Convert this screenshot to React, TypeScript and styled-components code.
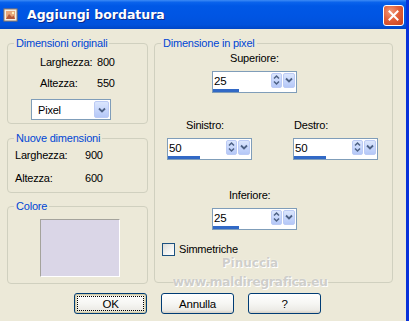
import styled, { createGlobalStyle } from "styled-components";

const GlobalStyle = createGlobalStyle`
  html, body {
    margin: 0;
    padding: 0;
    background: #ece9d8;
  }
  * {
    box-sizing: border-box;
  }
`;

const Window = styled.div`
  position: relative;
  width: 409px;
  height: 321px;
  display: flex;
  flex-direction: column;
  background: #ece9d8;
  border-right: 3px solid #0831d9;
  font-family: "Liberation Sans", Arial, sans-serif;
  font-size: 11px;
  letter-spacing: -0.2px;
  color: #000;
  overflow: hidden;
`;

const TitleBar = styled.div`
  height: 29px;
  flex: none;
  display: flex;
  align-items: center;
  padding: 0 2px 0 3px;
  letter-spacing: normal;
  background: linear-gradient(
    to bottom,
    #3d8bf5 0%,
    #0a63ec 8%,
    #0058e6 20%,
    #0055e3 55%,
    #0052dc 85%,
    #0046c6 100%
  );
`;

const TitleIcon = styled.svg`
  width: 16px;
  height: 16px;
  flex: none;
`;

const TitleText = styled.div`
  margin-left: 8px;
  flex: 1;
  color: #fff;
  font-family: "DejaVu Sans", "Liberation Sans", sans-serif;
  font-weight: bold;
  font-size: 12.5px;
  text-shadow: 1px 1px 0 #0b2a8c;
`;

const CloseButton = styled.div`
  width: 21px;
  height: 21px;
  margin-top: 1px;
  border: 1px solid #fff;
  border-radius: 3px;
  display: flex;
  align-items: center;
  justify-content: center;
  background: radial-gradient(
    circle at 35% 30%,
    #f29a7a 0%,
    #e2603a 45%,
    #c8401c 100%
  );
`;

const Body = styled.div`
  flex: 1;
  display: flex;
  flex-direction: column;
  padding: 8px 0 0 7px;
`;

const Columns = styled.div`
  display: grid;
  grid-template-columns: 141px 239px;
  column-gap: 6px;
  align-items: start;
`;

const LeftColumn = styled.div`
  display: flex;
  flex-direction: column;
`;

const Group = styled.fieldset<{ $h: number; $mt?: number }>`
  margin: ${(p) => p.$mt ?? 0}px 0 0 0;
  padding: 0;
  height: ${(p) => p.$h}px;
  min-width: 0;
  border: 1px solid #d0d0bf;
  border-radius: 4px;
`;

const Legend = styled.legend`
  margin-left: 6px;
  padding: 0 2px;
  line-height: 13px;
  color: #0046d5;
`;

const GroupContent = styled.div<{ $pt: number; $pl: number }>`
  display: flex;
  flex-direction: column;
  align-items: flex-start;
  padding: ${(p) => p.$pt}px 0 0 ${(p) => p.$pl}px;
`;

const InfoRow = styled.div<{ $mt: number; $labelW: number }>`
  display: grid;
  grid-template-columns: ${(p) => p.$labelW}px auto;
  line-height: 13px;
  margin-top: ${(p) => p.$mt}px;
`;

const Select = styled.div`
  margin-top: 9px;
  margin-left: -9px;
  width: 80px;
  height: 21px;
  border: 1px solid #7f9db9;
  background: #fff;
  display: flex;
  align-items: center;
  padding: 1px;
`;

const SelectText = styled.div`
  flex: 1;
  padding-left: 5px;
`;

const ArrowButton = styled.div<{ $w: number; $h: number }>`
  width: ${(p) => p.$w}px;
  height: ${(p) => p.$h}px;
  flex: none;
  display: flex;
  align-items: center;
  justify-content: center;
  border: 1px solid #bccbf5;
  border-radius: 2px;
  background: linear-gradient(to bottom, #dbe6fd 0%, #c4d4fb 60%, #b5c8f7 100%);
`;

const Swatch = styled.div`
  margin-top: 6px;
  width: 80px;
  height: 58px;
  background: #dad6e7;
  border: 1px solid;
  border-color: #a4a39c #fff #fff #a4a39c;
`;

const PixelContent = styled.div`
  display: flex;
  flex-direction: column;
  align-items: flex-start;
  padding-top: 2px;
`;

const Field = styled.div<{ $indent: number }>`
  display: flex;
  flex-direction: column;
  margin-left: ${(p) => p.$indent}px;
`;

const FieldLabel = styled.div<{ $pl: number }>`
  padding-left: ${(p) => p.$pl}px;
  line-height: 13px;
  height: 13px;
  margin-bottom: 6px;
`;

const FieldRow = styled.div<{ $mt: number }>`
  display: flex;
  gap: 41px;
  margin-top: ${(p) => p.$mt}px;
`;

const Spin = styled.div`
  width: 85px;
  height: 22px;
  border: 1px solid #7f9db9;
  background: #fff;
  display: flex;
  flex-direction: column;
`;

const SpinTop = styled.div`
  height: 16px;
  display: flex;
  align-items: center;
  padding-right: 1px;
  gap: 1px;
`;

const SpinValue = styled.div`
  flex: 1;
  padding-left: 1px;
  padding-top: 1px;
  font-size: 11.5px;
`;

const SpinBar = styled.div`
  margin-top: 1px;
  height: 3px;
  background: #3169c6;
`;

const CheckRow = styled.div`
  margin: 13px 0 0 7px;
  display: flex;
  align-items: center;
  gap: 4px;
  line-height: 13px;
`;

const CheckBox = styled.div`
  width: 13px;
  height: 13px;
  border: 1px solid #1c5180;
  background: linear-gradient(135deg, #dcdcd7 0%, #f4f4f2 60%, #fff 100%);
`;

const Footer = styled.div`
  display: flex;
  gap: 14px;
  margin: 9px 0 0 67px;
`;

const Button = styled.div<{ $default?: boolean }>`
  width: 73px;
  height: 21px;
  display: flex;
  align-items: center;
  justify-content: center;
  border: 1px solid #003c74;
  border-radius: 3px;
  background: linear-gradient(to bottom, #fff 0%, #f6f6f3 50%, #ecebe6 85%, #d6d0c5 100%);
  box-shadow: ${(p) =>
    p.$default ? "inset 0 0 0 1px #cfc9a7, inset 0 0 0 2px #e6e2cc" : "none"};
  outline: ${(p) => (p.$default ? "1px dotted #000" : "none")};
  outline-offset: -4px;
  font-size: 11.5px;
`;

const Watermark = styled.div`
  position: absolute;
  left: 150px;
  top: 255px;
  width: 200px;
  display: flex;
  flex-direction: column;
  align-items: center;
  font-family: "DejaVu Sans", sans-serif;
  font-weight: bold;
  letter-spacing: 0;
  color: rgba(190, 190, 186, 0.75);
  text-shadow: 0 0 1px #fff, 1px 1px 0 #fff;
  pointer-events: none;
`;

const WatermarkName = styled.div`
  font-size: 12px;
  line-height: 16px;
`;

const WatermarkUrl = styled.div`
  margin-top: 3px;
  font-size: 12.5px;
  line-height: 16px;
  letter-spacing: -0.4px;
`;

const ChevronDown = () => (
  <svg width="8" height="6" viewBox="0 0 8 6">
    <path d="M1 1.5 L4 4.5 L7 1.5" fill="none" stroke="#4d6185" strokeWidth="1.8" />
  </svg>
);

const UpDown = () => (
  <svg width="7" height="12" viewBox="0 0 7 12">
    <path d="M1 4.5 L3.5 2 L6 4.5" fill="none" stroke="#4d6185" strokeWidth="1.5" />
    <path d="M1 7.5 L3.5 10 L6 7.5" fill="none" stroke="#4d6185" strokeWidth="1.5" />
  </svg>
);

const SpinField = ({ value, bar }: { value: string; bar: number }) => (
  <Spin>
    <SpinTop>
      <SpinValue>{value}</SpinValue>
      <ArrowButton $w={11} $h={15}>
        <UpDown />
      </ArrowButton>
      <ArrowButton $w={12} $h={15}>
        <ChevronDown />
      </ArrowButton>
    </SpinTop>
    <SpinBar style={{ width: bar }} />
  </Spin>
);

export default function App() {
  return (
    <>
      <GlobalStyle />
      <Window>
        <TitleBar>
          <TitleIcon viewBox="0 0 16 16">
            <rect x="1" y="2" width="13" height="12" fill="#f4efe6" stroke="#9a7b5a" />
            <rect x="3" y="4" width="9" height="8" fill="#e8a77a" />
            <path d="M3 12 L6 7 L9 10 L10.5 8.5 L12 12 Z" fill="#b5583a" />
            <circle cx="10" cy="6" r="1.2" fill="#fff4c0" />
          </TitleIcon>
          <TitleText>Aggiungi bordatura</TitleText>
          <CloseButton>
            <svg width="11" height="11" viewBox="0 0 11 11">
              <path d="M1.5 1.5 L9.5 9.5 M9.5 1.5 L1.5 9.5" stroke="#fff" strokeWidth="2" strokeLinecap="square" />
            </svg>
          </CloseButton>
        </TitleBar>

        <Body>
          <Columns>
            <LeftColumn>
              <Group $h={87}>
                <Legend>Dimensioni originali</Legend>
                <GroupContent $pt={6} $pl={32}>
                  <InfoRow $mt={0} $labelW={57}>
                    <span>Larghezza:</span>
                    <span>800</span>
                  </InfoRow>
                  <InfoRow $mt={8} $labelW={57}>
                    <span>Altezza:</span>
                    <span>550</span>
                  </InfoRow>
                  <Select>
                    <SelectText>Pixel</SelectText>
                    <ArrowButton $w={15} $h={17}>
                      <ChevronDown />
                    </ArrowButton>
                  </Select>
                </GroupContent>
              </Group>

              <Group $h={61} $mt={8}>
                <Legend>Nuove dimensioni</Legend>
                <GroupContent $pt={4} $pl={7}>
                  <InfoRow $mt={0} $labelW={70}>
                    <span>Larghezza:</span>
                    <span>900</span>
                  </InfoRow>
                  <InfoRow $mt={10} $labelW={70}>
                    <span>Altezza:</span>
                    <span>600</span>
                  </InfoRow>
                </GroupContent>
              </Group>

              <Group $h={84} $mt={7}>
                <Legend>Colore</Legend>
                <GroupContent $pt={0} $pl={32}>
                  <Swatch />
                </GroupContent>
              </Group>
            </LeftColumn>

            <Group $h={246}>
              <Legend>Dimensione in pixel</Legend>
              <PixelContent>
                <Field $indent={57}>
                  <FieldLabel $pl={18}>Superiore:</FieldLabel>
                  <SpinField value="25" bar={26} />
                </Field>
                <FieldRow $mt={26}>
                  <Field $indent={12}>
                    <FieldLabel $pl={19}>Sinistro:</FieldLabel>
                    <SpinField value="50" bar={32} />
                  </Field>
                  <Field $indent={0}>
                    <FieldLabel $pl={1}>Destro:</FieldLabel>
                    <SpinField value="50" bar={32} />
                  </Field>
                </FieldRow>
                <Field $indent={57}>
                  <FieldLabel $pl={17} style={{ marginTop: 29 }}>
                    Inferiore:
                  </FieldLabel>
                  <SpinField value="25" bar={26} />
                </Field>
                <CheckRow>
                  <CheckBox />
                  <span>Simmetriche</span>
                </CheckRow>
              </PixelContent>
            </Group>
          </Columns>

          <Footer>
            <Button $default>OK</Button>
            <Button>Annulla</Button>
            <Button>?</Button>
          </Footer>
        </Body>

        <Watermark>
          <WatermarkName>Pinuccia</WatermarkName>
          <WatermarkUrl>www.maldiregrafica.eu</WatermarkUrl>
        </Watermark>
      </Window>
    </>
  );
}
